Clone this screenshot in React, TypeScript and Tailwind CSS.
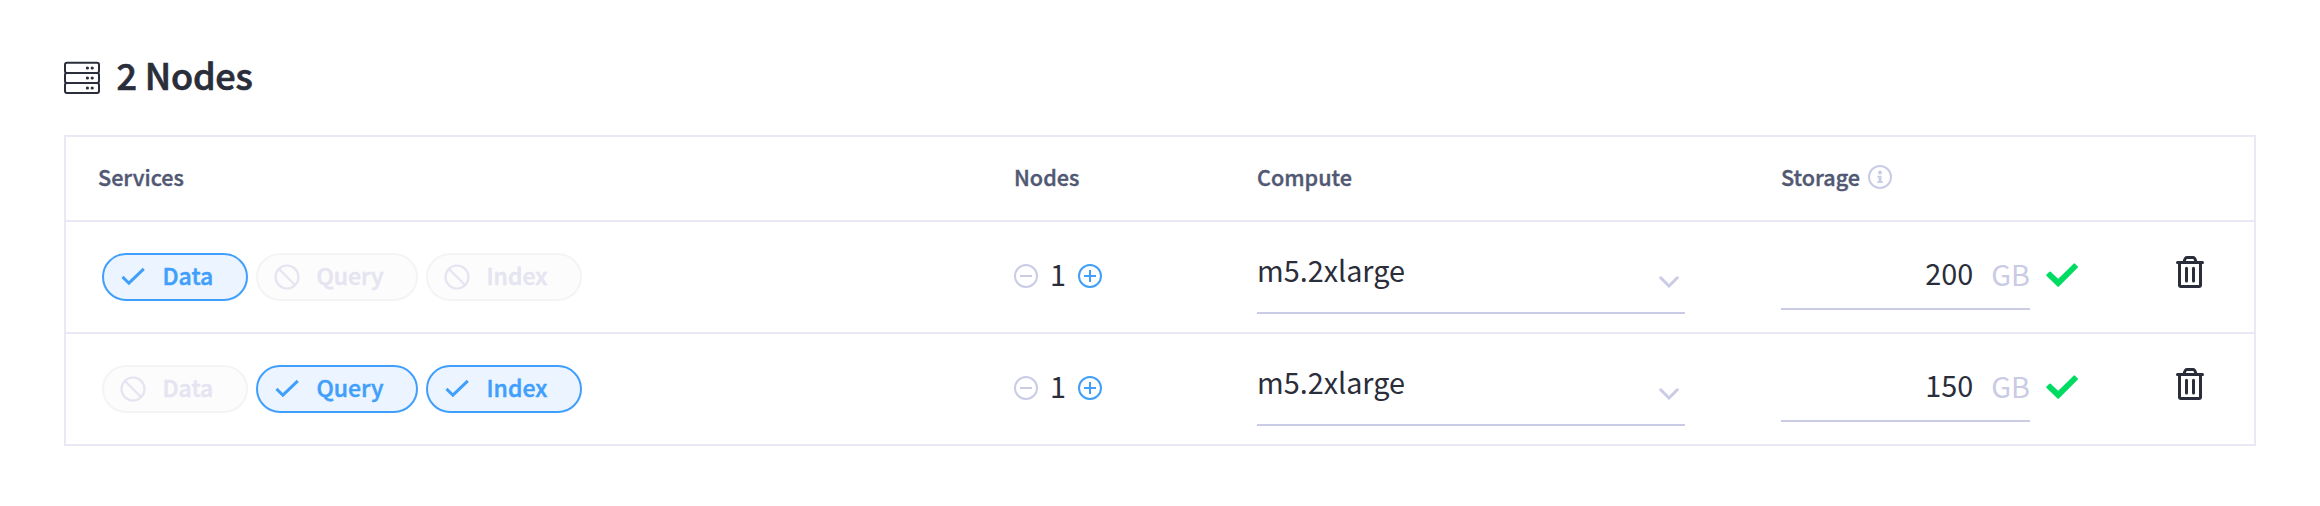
import React from "react";

type Service = { name: string; width: string; active: boolean };
type Row = { services: Service[]; nodes: number; compute: string; storage: number };

const rows: Row[] = [
  {
    services: [
      { name: "Data", width: "w-[146px]", active: true },
      { name: "Query", width: "w-[162px]", active: false },
      { name: "Index", width: "w-[156px]", active: false },
    ],
    nodes: 1,
    compute: "m5.2xlarge",
    storage: 200,
  },
  {
    services: [
      { name: "Data", width: "w-[146px]", active: false },
      { name: "Query", width: "w-[162px]", active: true },
      { name: "Index", width: "w-[156px]", active: true },
    ],
    nodes: 1,
    compute: "m5.2xlarge",
    storage: 150,
  },
];

const ServerIcon = () => (
  <svg className="h-[34px] w-9 shrink-0" viewBox="0 0 36 34" fill="none" stroke="#2a2d3a" strokeWidth="2">
    <rect x="1" y="1.8" width="34" height="10.2" rx="2" />
    <rect x="1" y="12" width="34" height="10" rx="2" />
    <rect x="1" y="22" width="34" height="10" rx="2" />
    <g fill="#2a2d3a" stroke="none">
      <circle cx="23.4" cy="7" r="1.6" />
      <circle cx="28.2" cy="7" r="1.6" />
      <circle cx="23.4" cy="17" r="1.6" />
      <circle cx="28.2" cy="17" r="1.6" />
      <circle cx="23.4" cy="27" r="1.6" />
      <circle cx="28.2" cy="27" r="1.6" />
    </g>
  </svg>
);

const CheckIcon = () => (
  <svg className="h-[26px] w-[26px] shrink-0" viewBox="0 0 26 26" fill="none" stroke="currentColor" strokeWidth="3">
    <path d="M2.5 12.9L8.9 19.2L23.8 4.8" />
  </svg>
);

const BanIcon = () => (
  <svg className="h-[26px] w-[26px] shrink-0" viewBox="0 0 26 26" fill="none" stroke="currentColor" strokeWidth="2.2">
    <circle cx="13" cy="13" r="11.5" />
    <path d="M5 5L21 21" />
  </svg>
);

const RoundIcon = ({ plus }: { plus?: boolean }) => (
  <svg className="h-6 w-6 shrink-0" viewBox="0 0 24 24" fill="none" stroke="currentColor" strokeWidth="2">
    <circle cx="12" cy="12" r="11" />
    <path d={plus ? "M6 12H18M12 6V18" : "M6 12H18"} />
  </svg>
);

const InfoIcon = () => (
  <svg className="h-6 w-6 shrink-0" viewBox="0 0 24 24" fill="none">
    <circle cx="12" cy="12" r="11" stroke="#cacbe5" strokeWidth="2" />
    <circle cx="12" cy="7.6" r="2" fill="#cacbe5" />
    <path d="M9.3 10.7H13.5V16.2H14.8V18H9.3V16.2H10.6V12.4H9.3Z" fill="#cacbe5" />
  </svg>
);

const ChevronIcon = () => (
  <svg className="h-3 w-5 shrink-0" viewBox="0 0 20 12" fill="none" stroke="#cacbe5" strokeWidth="3" strokeLinecap="round">
    <path d="M1.7 1.8L10 10L18.3 1.8" />
  </svg>
);

const ValidIcon = () => (
  <svg className="h-6 w-8 shrink-0" viewBox="0 0 32 24" fill="#00db63" stroke="#00db63" strokeWidth="2" strokeLinejoin="round">
    <path d="M1.3 12.2L4 9.5L12.2 17.3L28.3 1.4L30.9 4L12.2 22.7Z" />
  </svg>
);

const TrashIcon = () => (
  <svg className="h-8 w-7 shrink-0" viewBox="0 0 28 32" fill="none" stroke="#2a2d3a" strokeWidth="3" strokeLinecap="round" strokeLinejoin="round">
    <path d="M1.5 6.5H26.5" />
    <path d="M8 6C8.6 3.2 9.5 1.5 11 1.5H17C18.5 1.5 19.4 3.2 20 6" />
    <path d="M3.5 7V29C3.5 30 4 30.5 5 30.5H23C24 30.5 24.5 30 24.5 29V7" />
    <path d="M10.5 12.3V24.9M17.5 12.3V24.9" />
  </svg>
);

const Pill = ({ name, width, active }: Service) => (
  <div
    className={`flex h-12 items-center rounded-full border-2 pl-4 ${width} ${
      active ? "border-[#419ffc] bg-[#ecf5ff] text-[#419ffc]" : "border-[#f4f4f4] bg-[#fcfcfc] text-[#e5e4f1]"
    }`}
  >
    {active ? <CheckIcon /> : <BanIcon />}
    <span className="pb-1 pl-[16.5px] text-[23px] leading-8 font-medium [-webkit-text-stroke:0.5px_currentColor]">{name}</span>
  </div>
);

export default function App() {
  return (
    <main className="h-[506px] w-[2320px] bg-white px-16 pt-[52px] font-['Noto_Sans_CJK_SC',sans-serif] text-[#2a2d3a]">
      <h1 className="flex h-[52px] items-center gap-4">
        <ServerIcon />
        <span className="pb-2 pl-[0.5px] text-[36px] leading-10 font-medium tracking-[-0.2px] [-webkit-text-stroke:0.7px_currentColor]">
          2 Nodes
        </span>
      </h1>
      <section className="mt-[31px] w-[2192px] border-2 border-[#e9e9f3]">
        <header className="grid h-[83px] grid-cols-[916px_243px_524px_1fr] items-center pl-8 text-[21.6px] leading-8 font-medium text-[#515873] [-webkit-text-stroke:0.4px_currentColor]">
          <span className="pb-1">Services</span>
          <span className="pb-1">Nodes</span>
          <span className="pb-1">Compute</span>
          <div className="flex items-center gap-2">
            <span className="pb-1">Storage</span>
            <span className="pb-1"><InfoIcon /></span>
          </div>
        </header>
        {rows.map((row, i) => (
          <div
            key={i}
            className="grid h-28 grid-cols-[916px_243px_524px_1fr] border-t-2 border-[#e9e9f3] pl-8 text-[28.8px] leading-9"
          >
            <div className="flex items-center gap-2 pl-1">
              {row.services.map((s) => (
                <Pill key={s.name} {...s} />
              ))}
            </div>
            <div className="flex items-center pb-0.5">
              <span className="text-[#cacbe5]"><RoundIcon /></span>
              <span className="w-10 pb-[5px] text-center">{row.nodes}</span>
              <span className="text-[#419ffc]"><RoundIcon plus /></span>
            </div>
            <div className="flex h-[92px] w-[428px] items-start justify-between border-b-2 border-[#cacbe5] pt-[30px] pr-1.5">
              <span>{row.compute}</span>
              <span className="pt-6"><ChevronIcon /></span>
            </div>
            <div className="flex items-start justify-between pr-[50px]">
              <div className="flex">
                <div className="flex h-[88px] w-[249px] justify-end border-b-2 border-[#cacbe5] pt-[33px]">
                  <span>{row.storage}</span>
                  <span className="pt-px pl-[18px] text-[#cacbe5]">GB</span>
                </div>
                <span className="pt-[41px] pl-4"><ValidIcon /></span>
              </div>
              <span className="pt-[34px]"><TrashIcon /></span>
            </div>
          </div>
        ))}
      </section>
    </main>
  );
}
